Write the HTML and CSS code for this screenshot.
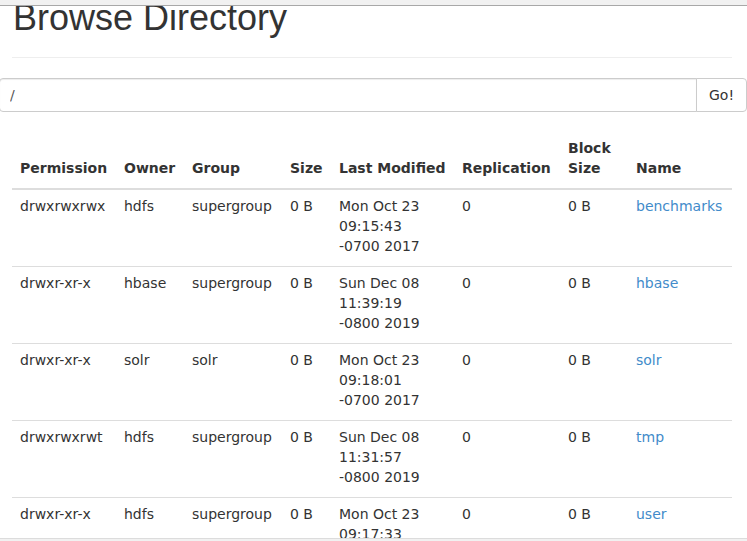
FILE: index.html
```html
<!DOCTYPE html>
<html>
<head>
<meta charset="utf-8">
<title>Browsing HDFS</title>
<link rel="stylesheet" href="styles.css">
</head>
<body>
<div class="topbar"></div>
<div class="container">
  <div class="page-header">
    <h1>Browse Directory</h1>
  </div>
  <div class="input-group">
    <input class="form-control" type="text" value="/">
    <button class="btn" type="button">Go!</button>
  </div>
  <table class="table">
    <colgroup>
      <col class="c-perm">
      <col class="c-owner">
      <col class="c-group">
      <col class="c-size">
      <col class="c-mod">
      <col class="c-repl">
      <col class="c-block">
      <col class="c-name">
    </colgroup>
    <thead>
      <tr>
        <th>Permission</th>
        <th>Owner</th>
        <th>Group</th>
        <th>Size</th>
        <th>Last Modified</th>
        <th>Replication</th>
        <th>Block Size</th>
        <th>Name</th>
      </tr>
    </thead>
    <tbody>
      <tr>
        <td>drwxrwxrwx</td><td>hdfs</td><td>supergroup</td><td>0 B</td>
        <td>Mon Oct 23 09:15:43 -0700 2017</td><td>0</td><td>0 B</td>
        <td><a href="#">benchmarks</a></td>
      </tr>
      <tr>
        <td>drwxr-xr-x</td><td>hbase</td><td>supergroup</td><td>0 B</td>
        <td>Sun Dec 08 11:39:19 -0800 2019</td><td>0</td><td>0 B</td>
        <td><a href="#">hbase</a></td>
      </tr>
      <tr>
        <td>drwxr-xr-x</td><td>solr</td><td>solr</td><td>0 B</td>
        <td>Mon Oct 23 09:18:01 -0700 2017</td><td>0</td><td>0 B</td>
        <td><a href="#">solr</a></td>
      </tr>
      <tr>
        <td>drwxrwxrwt</td><td>hdfs</td><td>supergroup</td><td>0 B</td>
        <td>Sun Dec 08 11:31:57 -0800 2019</td><td>0</td><td>0 B</td>
        <td><a href="#">tmp</a></td>
      </tr>
      <tr>
        <td>drwxr-xr-x</td><td>hdfs</td><td>supergroup</td><td>0 B</td>
        <td>Mon Oct 23 09:17:33 -0700 2017</td><td>0</td><td>0 B</td>
        <td><a href="#">user</a></td>
      </tr>
    </tbody>
  </table>
</div>
<div class="bottombar"></div>
</body>
</html>
```
FILE: styles.css
```css
* { box-sizing: border-box; }
html, body {
  margin: 0;
  padding: 0;
  background: #fff;
}
body {
  font-family: "DejaVu Sans", sans-serif;
  font-size: 14px;
  line-height: 20px;
  color: #333;
  overflow: hidden;
}
.topbar {
  position: fixed;
  top: 0;
  left: 0;
  right: 0;
  height: 6px;
  background: #f1f1f1;
  border-bottom: 1px solid #a8a8a8;
  z-index: 10;
}
.bottombar {
  position: fixed;
  bottom: 0;
  left: 0;
  right: 0;
  height: 3px;
  background: #f1f1f1;
  border-top: 1px solid #dcdcdc;
  z-index: 10;
}
.container {
  width: 720px;
  margin-left: 12px;
}
.page-header {
  margin-top: -2px;
  padding-bottom: 9px;
  border-bottom: 1px solid #eee;
  margin-bottom: 20px;
}
.page-header h1 {
  margin: 0 0 10px 1px;
  font-family: "Liberation Sans", Arial, sans-serif;
  font-weight: 500;
  font-size: 36px;
  line-height: 40px;
  color: #333;
}
.input-group {
  display: flex;
  margin-left: -13px;
  width: 748px;
  height: 34px;
}
.form-control {
  flex: 1;
  min-width: 0;
  height: 34px;
  padding: 6px 10px;
  font-family: "DejaVu Sans", sans-serif;
  font-size: 14px;
  line-height: 20px;
  color: #555;
  background: #fff;
  border: 1px solid #ccc;
  border-radius: 4px 0 0 4px;
  outline: none;
  box-shadow: inset 0 1px 1px rgba(0,0,0,.075);
}
.btn {
  height: 34px;
  padding: 6px 12px;
  margin-left: -1px;
  font-family: "DejaVu Sans", sans-serif;
  font-size: 14px;
  line-height: 20px;
  color: #333;
  background: #fff;
  border: 1px solid #ccc;
  border-radius: 0 4px 4px 0;
}
.table {
  width: 720px;
  table-layout: fixed;
  margin-top: 18px;
  border-collapse: collapse;
  border-spacing: 0;
}
.c-perm { width: 104px; }
.c-owner { width: 68px; }
.c-group { width: 98px; }
.c-size { width: 49px; }
.c-mod { width: 123px; }
.c-repl { width: 106px; }
.c-block { width: 68px; }
.c-name { width: 104px; }
.table th {
  text-align: left;
  vertical-align: bottom;
  font-weight: bold;
  padding: 8px 8px 10px;
  border-bottom: 2px solid #ddd;
}
.table td {
  vertical-align: top;
  padding: 6px 8px 10px;
  border-top: 1px solid #ddd;
}
.table a {
  color: #428bca;
  text-decoration: none;
}
```
